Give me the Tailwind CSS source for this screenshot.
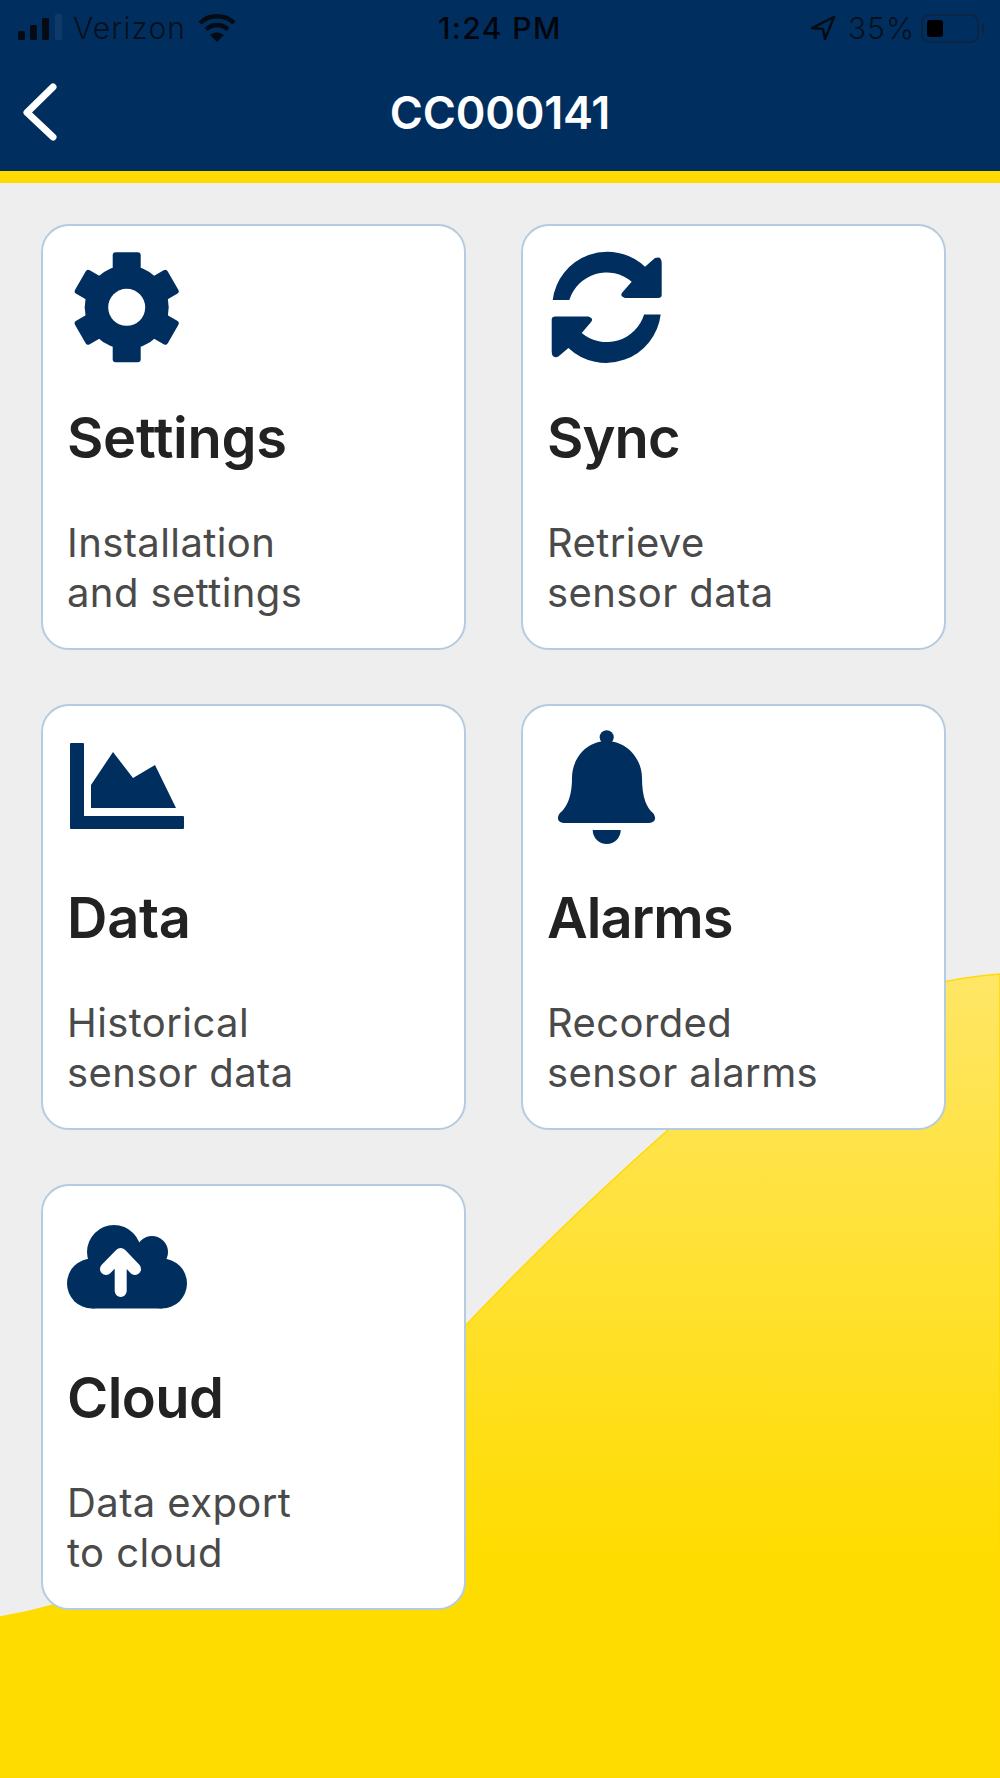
<!DOCTYPE html>
<html lang="en">
<head>
    <meta charset="UTF-8">
    <meta name="viewport" content="width=device-width, initial-scale=1.0">
    <title>CC000141</title>
    <script src="https://cdn.jsdelivr.net/npm/@tailwindcss/browser@4"></script>
</head>
<body class="bg-[#eeeeee] font-['Inter',sans-serif]">
    <div class="relative w-[1000px] h-[1778px] overflow-hidden">
        <!-- yellow swoosh behind the cards -->
        <svg class="absolute left-0 top-0" width="1000" height="1778" viewBox="0 0 1000 1778">
            <defs>
                <linearGradient id="swoosh" x1="0" y1="974" x2="0" y2="1560" gradientUnits="userSpaceOnUse">
                    <stop offset="0" stop-color="#ffe666"/>
                    <stop offset="1" stop-color="#ffdc00"/>
                </linearGradient>
            </defs>
            <path d="M0 1617 C160 1590 310 1490 466 1325 C540 1247 600 1190 668 1130 C780 1035 880 983 1000 974 V1778 H0 Z" fill="url(#swoosh)" stroke="#ffd900" stroke-width="1.5"/>
        </svg>

        <div class="relative">
            <!-- status bar -->
            <div class="h-[56px] bg-[#002f5f] flex items-center justify-between text-[#07101c] text-[30px] leading-none">
                <div class="flex items-center">
                    <svg class="ml-[18px]" width="46" height="28" viewBox="0 0 46 28">
                        <rect x="0" y="17" width="7" height="9" rx="1.5" fill="#050b14"/>
                        <rect x="12" y="11" width="7" height="15" rx="1.5" fill="#050b14"/>
                        <rect x="24" y="4" width="7" height="22" rx="1.5" fill="#050b14"/>
                        <rect x="37" y="0" width="7" height="26" rx="1.5" fill="#0d3a68"/>
                    </svg>
                    <span class="ml-[9px] w-[125px] font-light tracking-[1.1px]">Verizon</span>
                    <svg width="38" height="28" viewBox="0 0 38 28" fill="none" stroke="#050b14" stroke-width="4.5">
                        <path d="M2 9 C11 0 27 0 36 9"/>
                        <path d="M8 15.5 C14 9.5 24 9.5 30 15.5"/>
                        <path d="M19 28 L12 21 C16 17.5 22 17.5 26 21 Z" fill="#050b14" stroke="none"/>
                    </svg>
                </div>
                <span class="absolute left-[438px] top-[13px] text-[#02060c] font-medium tracking-[1.4px]">1:24 PM</span>
                <div class="flex items-center pr-[16px]">
                    <svg width="26" height="26" viewBox="0 0 26 26" fill="none" stroke="#050b14" stroke-width="2.5" stroke-linejoin="round">
                        <path d="M24 2 L2 13 L13 14 L15 24 Z"/>
                    </svg>
                    <span class="ml-[12px] font-light tracking-[1px]">35%</span>
                    <div class="ml-[6px] w-[58px] h-[29px] rounded-[8px] border-2 border-[#0a2545] p-[4px]">
                        <div class="w-[16px] h-full rounded-[3px] bg-black"></div>
                    </div>
                    <div class="ml-[3px] w-[2px] h-[10px] bg-[#0a2545]"></div>
                </div>
            </div>

            <!-- header -->
            <header class="relative h-[115px] bg-[#002f5f] flex items-center justify-center">
                <svg class="absolute left-[21px] top-[27px]" width="44" height="60" viewBox="0 0 44 60" fill="none" stroke="#ffffff" stroke-width="7" stroke-linecap="round" stroke-linejoin="round">
                    <path d="M32 4 L6 29.5 L32 54"/>
                </svg>
                <h1 class="text-white text-[45px] leading-none font-semibold tracking-[-0.2px] mt-[-2px]">CC000141</h1>
            </header>
            <div class="h-[12px] bg-[#ffd900]"></div>

            <!-- menu cards -->
            <main class="grid grid-cols-[425px_425px] gap-x-[55px] gap-y-[54px] pl-[41px] pt-[41px]">
                <div class="h-[426px] bg-white rounded-[28px] border-2 border-[#b4cbe0] pl-[24px] pt-[22px]">
                    <svg width="120" height="120" viewBox="0 0 120 120" fill="#002f5f">
                        <g transform="translate(59.7 59.3)">
                            <circle r="42"/>
                            <rect x="-14" y="-55" width="28" height="24" rx="3"/>
                            <rect x="-13.5" y="-53.5" width="27" height="24" rx="3" transform="rotate(60)"/>
                            <rect x="-13.5" y="-53.5" width="27" height="24" rx="3" transform="rotate(120)"/>
                            <rect x="-14" y="-55" width="28" height="24" rx="3" transform="rotate(180)"/>
                            <rect x="-13.5" y="-53.5" width="27" height="24" rx="3" transform="rotate(240)"/>
                            <rect x="-13.5" y="-53.5" width="27" height="24" rx="3" transform="rotate(300)"/>
                            <circle r="18.5" fill="#ffffff"/>
                        </g>
                    </svg>
                    <h2 class="mt-[38px] text-[56px] leading-[64px] font-semibold tracking-[-0.3px] text-[#222222]">Settings</h2>
                    <p class="mt-[48px] text-[40px] leading-[50px] tracking-[0.4px] text-[#4a4a4a]">Installation<br>and settings</p>
                </div>

                <div class="h-[426px] bg-white rounded-[28px] border-2 border-[#b4cbe0] pl-[24px] pt-[22px]">
                    <svg width="120" height="120" viewBox="0 0 120 120" fill="#002f5f">
                        <path d="M5.7 52 A55 55 0 0 1 98 18.7 L108 10 Q114.7 7.5 114.7 15.3 V47 Q114.7 50 111 50 H78 Q72 48 75.7 44 L84.7 33.7 A39 39 0 0 0 22.3 52 Z"/>
                        <path d="M5.7 52 A55 55 0 0 1 98 18.7 L108 10 Q114.7 7.5 114.7 15.3 V47 Q114.7 50 111 50 H78 Q72 48 75.7 44 L84.7 33.7 A39 39 0 0 0 22.3 52 Z" transform="rotate(180 59.7 59.3)"/>
                    </svg>
                    <h2 class="mt-[38px] text-[56px] leading-[64px] font-semibold tracking-[-0.9px] text-[#222222]">Sync</h2>
                    <p class="mt-[48px] text-[40px] leading-[50px] tracking-[0.4px] text-[#4a4a4a]">Retrieve<br>sensor data</p>
                </div>

                <div class="h-[426px] bg-white rounded-[28px] border-2 border-[#b4cbe0] pl-[24px] pt-[22px]">
                    <svg width="120" height="120" viewBox="0 0 120 120" fill="#002f5f">
                        <path d="M4 15 H16 Q17 15 17 16 V88 H116 Q117 88 117 89 V100 Q117 101 116 101 H4 Q3 101 3 100 V16 Q3 15 4 15 Z"/>
                        <path d="M24 57 L46 24 L66 50 L88 37 L109 80 H24 Z"/>
                    </svg>
                    <h2 class="mt-[38px] text-[56px] leading-[64px] font-semibold tracking-[-0.3px] text-[#222222]">Data</h2>
                    <p class="mt-[48px] text-[40px] leading-[50px] tracking-[0.4px] text-[#4a4a4a]">Historical<br>sensor data</p>
                </div>

                <div class="h-[426px] bg-white rounded-[28px] border-2 border-[#b4cbe0] pl-[24px] pt-[22px]">
                    <svg width="120" height="120" viewBox="0 0 120 120" fill="#002f5f">
                        <circle cx="59.7" cy="9.3" r="7"/>
                        <path d="M59.7 13 C40 13 25 30 25 50 C25 70 19 80 13 85 C9 90 11 95 17 95 H102 C108 95 110 90 106 85 C100 80 95 70 95 50 C95 30 79 13 59.7 13 Z"/>
                        <path d="M45.7 102 H73.7 A14 14 0 0 1 45.7 102 Z"/>
                    </svg>
                    <h2 class="mt-[38px] text-[56px] leading-[64px] font-semibold tracking-[-1px] text-[#222222]">Alarms</h2>
                    <p class="mt-[48px] text-[40px] leading-[50px] tracking-[0.4px] text-[#4a4a4a]">Recorded<br>sensor alarms</p>
                </div>

                <div class="h-[426px] bg-white rounded-[28px] border-2 border-[#b4cbe0] pl-[24px] pt-[22px]">
                    <svg width="120" height="120" viewBox="0 0 120 120" fill="#002f5f">
                        <circle cx="25" cy="75.5" r="25"/>
                        <circle cx="95" cy="75.5" r="25"/>
                        <rect x="25" y="50.5" width="70" height="50"/>
                        <circle cx="47" cy="44" r="27"/>
                        <circle cx="85" cy="44" r="16"/>
                        <path d="M53.7 83 V46 M39 61 L53.7 46 L68 61" fill="none" stroke="#ffffff" stroke-width="12" stroke-linecap="round" stroke-linejoin="round"/>
                    </svg>
                    <h2 class="mt-[38px] text-[56px] leading-[64px] font-semibold tracking-[-0.6px] text-[#222222]">Cloud</h2>
                    <p class="mt-[48px] text-[40px] leading-[50px] tracking-[0.4px] text-[#4a4a4a]">Data export<br>to cloud</p>
                </div>
            </main>
        </div>
    </div>
</body>
</html>
